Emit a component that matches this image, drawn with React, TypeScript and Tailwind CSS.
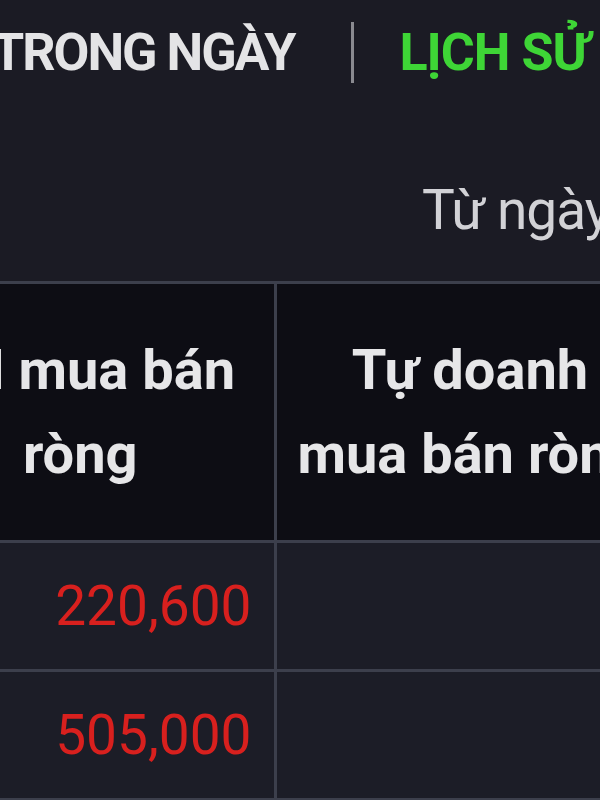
import React from 'react';

const rows = [
  { foreign: '220,600', prop: '' },
  { foreign: '505,000', prop: '' },
];

export default function App() {
  return (
    <div className="w-[600px] h-[800px] overflow-hidden bg-[#1b1b24] font-['Roboto',sans-serif]">
      {/* tabs */}
      <div className="flex items-center h-[105px] ml-[-8px] whitespace-nowrap">
        <span className="shrink-0 text-[52px] leading-none font-bold tracking-[-2px] text-[#e4e4e6]">TRONG NGÀY</span>
        <span className="shrink-0 ml-[57px] mr-[45px] w-[3px] h-[61px] bg-[#8a8a90]" />
        <span className="shrink-0 text-[52px] leading-none font-bold tracking-[-1px] text-[#3ed536]">LỊCH SỬ</span>
      </div>

      {/* date filter */}
      <div className="flex items-center h-[176px] pl-[422px] pt-[34px] whitespace-nowrap">
        <span className="text-[55px] leading-none tracking-[-1px] text-[#d2d2d6]">Từ ngày</span>
      </div>

      {/* table */}
      <div className="ml-[-113px] w-[900px]">
        <table className="border-collapse table-fixed w-[900px]">
          <colgroup>
            <col className="w-[388px]" />
            <col className="w-[390px]" />
            <col />
          </colgroup>
          <thead>
            <tr className="bg-[#0d0d14] h-[259px]">
              <th className="border-[3px] border-[#3c3f4c] border-l-0 px-[20px] text-center align-middle text-[56px] leading-[84px] font-bold text-[#e6e6e8]">
                NN mua bán ròng
              </th>
              <th className="border-[3px] border-[#3c3f4c] px-[20px] text-center align-middle text-[56px] leading-[84px] font-bold text-[#e6e6e8]">
                Tự doanh mua bán ròng
              </th>
              <th className="border-[3px] border-[#3c3f4c] border-r-0" />
            </tr>
          </thead>
          <tbody>
            {rows.map((r) => (
              <tr key={r.foreign} className="bg-[#1c1d27] h-[129px]">
                <td className="border-[3px] border-[#3c3f4c] border-l-0 pr-[22px] text-right align-middle text-[55px] leading-none text-[#d8201e]">
                  {r.foreign}
                </td>
                <td className="border-[3px] border-[#3c3f4c] text-right align-middle text-[55px] leading-none text-[#d8201e]">
                  {r.prop}
                </td>
                <td className="border-[3px] border-[#3c3f4c] border-r-0" />
              </tr>
            ))}
          </tbody>
        </table>
      </div>
    </div>
  );
}
